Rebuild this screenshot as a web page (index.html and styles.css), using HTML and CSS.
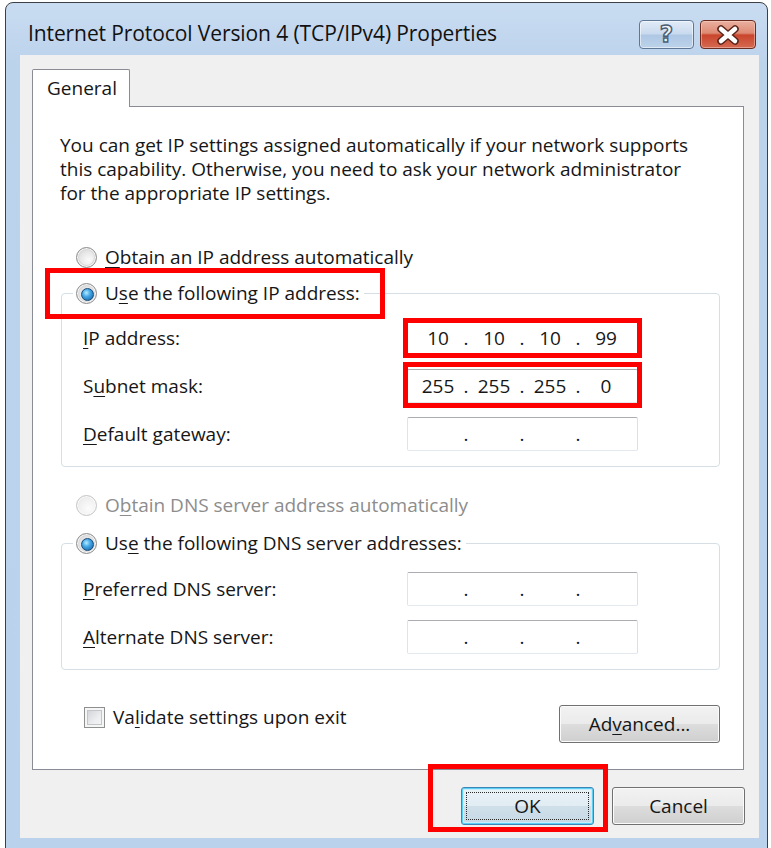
FILE: index.html
```html
<!DOCTYPE html>
<html lang="en">
<head>
<meta charset="utf-8">
<title>Internet Protocol Version 4 (TCP/IPv4) Properties</title>
<link rel="stylesheet" href="styles.css">
</head>
<body>
<div class="window">
  <header class="titlebar">
    <span class="title">Internet Protocol Version 4 (TCP/IPv4) Properties</span>
    <div class="caption-buttons">
      <span class="cap-btn cap-help">?</span>
      <span class="cap-btn cap-close">
        <svg width="28" height="20" viewBox="0 0 28 20">
          <path d="M7 4 L21 16 M21 4 L7 16" stroke="#5a2419" stroke-width="7.5" stroke-linecap="round" fill="none"/>
          <path d="M7 4 L21 16 M21 4 L7 16" stroke="#ffffff" stroke-width="4.5" stroke-linecap="round" fill="none"/>
        </svg>
      </span>
    </div>
  </header>

  <main class="client">
    <div class="tabstrip"><div class="tab">General</div></div>

    <section class="tabpage">
      <p class="intro">You can get IP settings assigned automatically if your network supports<br>this capability. Otherwise, you need to ask your network administrator<br>for the appropriate IP settings.</p>

      <div class="option option-first"><span class="radio"></span><span><u>O</u>btain an IP address automatically</span></div>

      <fieldset class="group">
        <legend class="option"><span class="radio checked"></span><span>U<u>s</u>e the following IP address:</span></legend>
        <div class="fields">
          <label><u>I</u>P address:</label>
          <div class="ipbox"><span class="oct">10</span><span class="dot">.</span><span class="oct">10</span><span class="dot">.</span><span class="oct">10</span><span class="dot">.</span><span class="oct">99</span></div>
          <label>S<u>u</u>bnet mask:</label>
          <div class="ipbox"><span class="oct">255</span><span class="dot">.</span><span class="oct">255</span><span class="dot">.</span><span class="oct">255</span><span class="dot">.</span><span class="oct">0</span></div>
          <label><u>D</u>efault gateway:</label>
          <div class="ipbox"><span class="oct"></span><span class="dot">.</span><span class="oct"></span><span class="dot">.</span><span class="oct"></span><span class="dot">.</span><span class="oct"></span></div>
        </div>
      </fieldset>

      <div class="option option-dns disabled"><span class="radio"></span><span>O<u>b</u>tain DNS server address automatically</span></div>

      <fieldset class="group group-dns">
        <legend class="option"><span class="radio checked"></span><span>Us<u>e</u> the following DNS server addresses:</span></legend>
        <div class="fields">
          <label><u>P</u>referred DNS server:</label>
          <div class="ipbox"><span class="oct"></span><span class="dot">.</span><span class="oct"></span><span class="dot">.</span><span class="oct"></span><span class="dot">.</span><span class="oct"></span></div>
          <label><u>A</u>lternate DNS server:</label>
          <div class="ipbox"><span class="oct"></span><span class="dot">.</span><span class="oct"></span><span class="dot">.</span><span class="oct"></span><span class="dot">.</span><span class="oct"></span></div>
        </div>
      </fieldset>

      <div class="footer">
        <div class="check"><span class="checkbox"></span><span>Va<u>l</u>idate settings upon exit</span></div>
        <button class="btn btn-advanced">Ad<u>v</u>anced...</button>
      </div>
    </section>

    <div class="actions">
      <button class="btn btn-default"><span class="focus-ring">OK</span></button>
      <button class="btn">Cancel</button>
    </div>
  </main>
</div>

<div class="callout callout-mode"></div>
<div class="callout callout-ip"></div>
<div class="callout callout-mask"></div>
<div class="callout callout-ok"></div>
</body>
</html>
```

FILE: styles.css
```css
* {
  box-sizing: border-box;
}

html,
body {
  margin: 0;
  height: 100%;
}

body {
  position: relative;
  overflow: hidden;
  background: #ffffff;
  font-family: "Open Sans", "Noto Sans", "DejaVu Sans", sans-serif;
  font-size: 19px;
  color: #161616;
}

u {
  text-decoration: underline;
  text-decoration-thickness: 1px;
  text-underline-offset: 3px;
}

/* ---------- window frame ---------- */
.window {
  margin: 2px 0 0 5px;
  width: 763px;
  height: 870px;
  border: 1px solid #3c3f44;
  border-radius: 8px 8px 0 0;
  background: linear-gradient(#c9dcf1, #bcd3ec 60px, #bad2ec);
  display: flex;
  flex-direction: column;
}

.titlebar {
  flex: none;
  height: 52px;
  display: flex;
  justify-content: space-between;
  align-items: flex-start;
  padding: 0 11px 0 22px;
}

.title {
  margin-top: 17px;
  line-height: 26px;
  font-size: 21px;
  letter-spacing: -0.1px;
  color: #111111;
  white-space: nowrap;
}

.caption-buttons {
  display: flex;
  gap: 6px;
  margin-top: 17px;
}

.cap-btn {
  height: 29px;
  border-radius: 4px;
  display: flex;
  align-items: center;
  justify-content: center;
}

.cap-help {
  width: 55px;
  border: 1px solid #5f7796;
  background: linear-gradient(#e1ebf7, #c9daee 48%, #aec7e4 52%, #bcd2ea);
  box-shadow: inset 0 0 0 1px rgba(255, 255, 255, 0.55);
  font-family: "DejaVu Sans", sans-serif;
  font-weight: 700;
  font-size: 23px;
  color: #eef2f7;
  -webkit-text-stroke: 1.4px #4c5d73;
  line-height: 1;
}

.cap-close {
  width: 56px;
  border: 1px solid #6a2c21;
  background: linear-gradient(#eab0a0, #de8a74 45%, #c9452c 52%, #d66a52);
  box-shadow: inset 0 0 0 1px rgba(255, 220, 210, 0.45);
}

/* ---------- dialog client area ---------- */
.client {
  flex: none;
  height: 783px;
  margin: 0 8px 0 14px;
  padding: 14px 14px 12px 12px;
  background: #f0f0f0;
  display: flex;
  flex-direction: column;
}

.tabstrip {
  display: flex;
  height: 37px;
}

.tab {
  position: relative;
  z-index: 1;
  width: 98px;
  height: 38px;
  padding: 6px 0 0 14px;
  line-height: 24px;
  background: #ffffff;
  border: 1px solid #898c95;
  border-bottom: none;
  border-radius: 2px 2px 0 0;
}

.tabpage {
  width: 712px;
  height: 664px;
  padding: 26px 23px 0 27px;
  background: #ffffff;
  border: 1px solid #898c95;
}

.intro {
  margin: 0;
  line-height: 24px;
  white-space: nowrap;
}

/* ---------- radio rows and group boxes ---------- */
.option {
  display: flex;
  align-items: center;
  gap: 8px;
  height: 30px;
  margin-left: 16px;
  white-space: nowrap;
}

.option-first {
  margin-top: 37px;
}

.option-dns {
  margin-top: 23px;
}

.disabled {
  color: #8d8d8d;
}

.radio {
  flex: none;
  position: relative;
  width: 21px;
  height: 21px;
  border-radius: 50%;
  border: 1px solid #8b8b8b;
  background: radial-gradient(circle at 62% 65%, #fbfbfb 0, #e9e9e9 45%, #cbcbcb 100%);
  box-shadow: inset 0 0 0 1px #f7f7f7, inset 0 0 0 2px #d9d9d9;
}

.disabled .radio {
  border-color: #c4c4c4;
  background: radial-gradient(circle at 62% 65%, #fcfcfc 0, #f1f1f1 50%, #e2e2e2 100%);
  box-shadow: inset 0 0 0 1px #fafafa;
}

.radio.checked::after {
  content: "";
  position: absolute;
  left: 4px;
  top: 4px;
  width: 11px;
  height: 11px;
  border-radius: 50%;
  border: 1px solid #174a78;
  background: radial-gradient(circle at 40% 35%, #b6ecff 0, #43a6e6 40%, #115b9a 100%);
}

.group {
  margin: 6px 0 0 1px;
  padding: 0;
  min-width: 0;
  border: 1px solid #d5dfe5;
  border-radius: 4px;
}

.group-dns {
  margin-top: 8px;
}

.group legend.option {
  width: max-content;
  margin-left: 11px;
  padding: 0 4px 0 3px;
}

.fields {
  display: grid;
  grid-template-columns: 324px 231px;
  row-gap: 14px;
  align-items: center;
  padding: 13px 0 15px 21px;
}

.group-dns .fields {
  padding-top: 14px;
}

.fields label {
  white-space: nowrap;
}

/* dotted-quad address box */
.ipbox {
  height: 34px;
  display: flex;
  align-items: center;
  padding-left: 5px;
  background: #ffffff;
  border: 1px solid;
  border-color: #abadb3 #dbdfe6 #e3e9ef #e2e3ea;
  border-radius: 2px;
}

.oct {
  width: 50px;
  text-align: center;
}

.dot {
  width: 6px;
  text-align: center;
}

/* ---------- bottom of the tab page ---------- */
.footer {
  display: flex;
  justify-content: space-between;
  align-items: flex-start;
  margin-top: 35px;
}

.check {
  display: flex;
  align-items: center;
  gap: 8px;
  height: 24px;
  margin-left: 24px;
}

.checkbox {
  width: 21px;
  height: 21px;
  border: 1px solid #8e8f8f;
  background: linear-gradient(135deg, #cbcdd1, #eceef0 60%, #f8f8f8);
  box-shadow: inset 0 0 0 2px #f6f6f6, inset 0 0 0 3px #c3c5c8;
}

.btn {
  position: relative;
  height: 38px;
  padding: 0;
  font: inherit;
  color: #161616;
  border: 1px solid #707070;
  border-radius: 3px;
  background: linear-gradient(#f2f2f2, #ebebeb 49%, #dddddd 51%, #cfcfcf);
  box-shadow: inset 0 0 0 1px #fbfbfb;
  display: flex;
  align-items: center;
  justify-content: center;
}

.btn-advanced {
  width: 161px;
}

.actions {
  display: flex;
  justify-content: flex-end;
  gap: 18px;
  margin-top: 17px;
}

.actions .btn {
  width: 133px;
}

.btn-default {
  border-color: #3a86b8;
  background: linear-gradient(#ebf3f8, #e1ecf3 49%, #d0e0ea 51%, #c6d9e6);
  box-shadow: inset 0 0 0 1px #5ccff6, inset 0 0 0 2px #c7ecfa;
}

.focus-ring {
  display: flex;
  align-items: center;
  justify-content: center;
  width: calc(100% - 8px);
  height: calc(100% - 8px);
  border: 1px dotted #2b2b2b;
}

/* ---------- red call-out frames ---------- */
.callout {
  position: absolute;
  border: 5px solid #ff0000;
}

.callout-mode {
  left: 45px;
  top: 268px;
  width: 340px;
  height: 51px;
}

.callout-ip {
  left: 403px;
  top: 318px;
  width: 239px;
  height: 40px;
}

.callout-mask {
  left: 403px;
  top: 362px;
  width: 239px;
  height: 46px;
}

.callout-ok {
  left: 428px;
  top: 764px;
  width: 180px;
  height: 68px;
}
```
